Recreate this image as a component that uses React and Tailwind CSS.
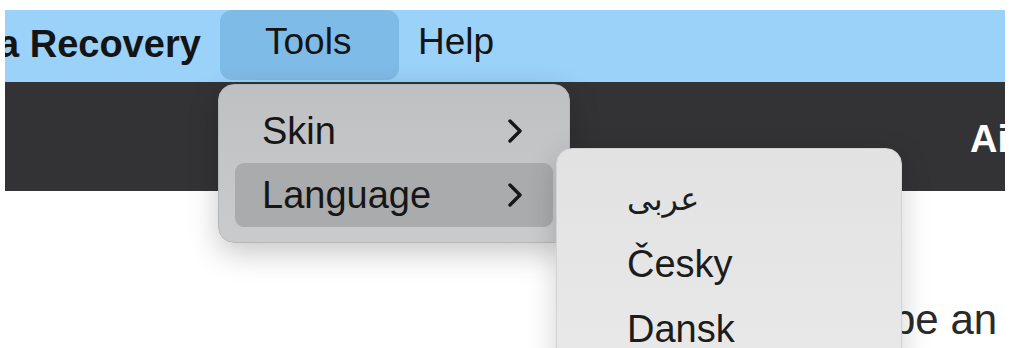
import React from 'react';

const Chevron = () => (
  <svg width="16" height="26" viewBox="0 0 16 26" fill="none" className="shrink-0">
    <polyline points="3,3 13,13 3,23" stroke="#161616" strokeWidth="3.4" strokeLinecap="round" strokeLinejoin="round" />
  </svg>
);

export default function App() {
  const font = { fontFamily: '"Liberation Sans", Arial, sans-serif' };

  return (
    <div className="relative w-[1012px] h-[348px] overflow-hidden bg-white pt-[10px] pl-[5px] pr-[7px]" style={font}>
      <div className="h-[338px] flex flex-col overflow-hidden">
        {/* menu bar */}
        <div className="h-[72px] shrink-0 bg-[#9bd2f9] flex items-start overflow-hidden">
          <span className="w-[222px] shrink-0 -ml-[7px] text-[38px] leading-[68px] font-bold text-[#141414] whitespace-nowrap">
            a Recovery
          </span>
          <div className="w-[179px] h-[70px] shrink-0 rounded-[12px] bg-[#7fbbe7] pl-[45px] text-[37px] leading-[64px] text-[#141414]">
            Tools
          </div>
          <span className="ml-[19px] text-[37px] leading-[64px] text-[#141414]">Help</span>
        </div>

        {/* dark toolbar */}
        <div className="h-[109px] shrink-0 bg-[#333336] pl-[965px] pt-[38px] overflow-hidden">
          <span className="text-[38px] leading-none font-semibold text-white whitespace-nowrap">Ai</span>
        </div>

        {/* content */}
        <div className="flex-1 overflow-hidden pl-[887px] pt-[108px]">
          <p className="text-[42px] leading-none text-[#2a2a2a] whitespace-nowrap">be an</p>
        </div>
      </div>

      {/* Tools menu */}
      <div className="absolute left-[218px] top-[84px] w-[352px] h-[159px] rounded-[16px] bg-gradient-to-b from-[#bec0c2] to-[#c9cbcd] shadow-[0_10px_30px_rgba(0,0,0,0.22)] border border-[#b4b6b8] px-[16px] pt-[14px]">
        <div className="h-[64px] flex items-center justify-between pl-[27px] pr-[30px]">
          <span className="text-[38px] leading-[64px] text-[#161616]">Skin</span>
          <Chevron />
        </div>
        <div className="h-[64px] flex items-center justify-between pl-[27px] pr-[30px] rounded-[9px] bg-[#a9abad]">
          <span className="text-[38px] leading-[64px] text-[#161616]">Language</span>
          <Chevron />
        </div>
      </div>

      {/* Language submenu */}
      <div className="absolute left-[556px] top-[148px] w-[346px] h-[230px] rounded-[16px] bg-gradient-to-b from-[#e2e2e3] to-[#e9e9e9] shadow-[0_8px_30px_rgba(0,0,0,0.18)] border border-[#d2d2d2] pt-[18px] pl-[70px]">
        <div className="h-[65px] text-[32px] leading-[65px] text-[#1c1c1c]" style={{ fontFamily: '"DejaVu Sans", "Noto Sans", sans-serif' }}>
          عربى
        </div>
        <div className="h-[65px] text-[38px] leading-[65px] text-[#1c1c1c]">Česky</div>
        <div className="h-[65px] text-[38px] leading-[65px] text-[#1c1c1c]">Dansk</div>
      </div>
    </div>
  );
}
